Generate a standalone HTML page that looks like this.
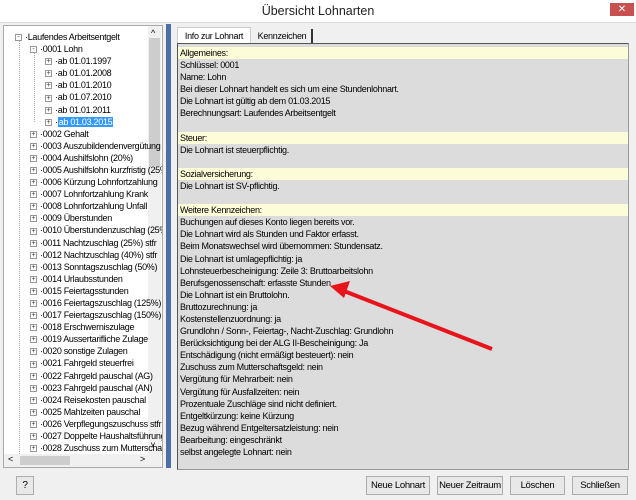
<!DOCTYPE html><html><head><meta charset="utf-8"><style>
*{margin:0;padding:0;box-sizing:border-box}
body{width:636px;height:500px;background:#f0f0f0;font-family:"Liberation Sans",sans-serif;font-size:9px;letter-spacing:-0.3px;color:#000;position:relative;overflow:hidden}
.a{position:absolute;white-space:nowrap}
.title{left:0;top:0;width:636px;height:22px;background:#fff;text-align:center;font-size:12.5px;letter-spacing:0;line-height:22px;color:#222}
.close{left:610px;top:3px;width:24px;height:13px;background:#c75050;color:#fff;font-size:10px;text-align:center;line-height:13px;letter-spacing:0}
.tree{left:3px;top:25px;width:160px;height:443px;background:#fff;border:1px solid #aaa;overflow:hidden}
.ti{position:absolute;height:12px;line-height:12px;white-space:nowrap}
.pb{display:inline-block;width:7px;height:7px;border:1px solid #999;font-size:7px;line-height:5px;text-align:center;color:#333;vertical-align:middle;margin-right:3px;background:#fff;letter-spacing:0}
.row{position:absolute;left:0;right:0;height:12.1px;line-height:12.1px;padding-left:2px;white-space:nowrap}
.y{background:#fdfcd8}
.btn{position:absolute;top:476px;height:19px;border:1px solid #adadad;background:#e8e8e8;text-align:center;line-height:17px;font-size:9.5px}
</style></head><body>
<div class="a title">Übersicht Lohnarten</div>
<div class="a close">✕</div>
<div class="a" style="left:0;top:22px;width:636px;height:1px;background:#ddd"></div>
<div class="a tree">
<div style="position:absolute;left:15px;top:12px;width:0;height:420px;border-left:1px dotted #aaa"></div>
<div style="position:absolute;left:30px;top:24px;width:0;height:72px;border-left:1px dotted #aaa"></div>
<div style="position:absolute;left:144px;top:0;width:13px;height:428px;background:#f0f0f0"></div>
<div style="position:absolute;left:145px;top:12px;width:11px;height:128px;background:#cdcdcd"></div>
<div style="position:absolute;left:147px;top:2px;font-size:9px">^</div>
<div style="position:absolute;left:147px;top:414px;font-size:8px">v</div>
<div style="position:absolute;left:0;top:428px;width:157px;height:13px;background:#f0f0f0"></div>
<div style="position:absolute;left:16px;top:430px;width:50px;height:9px;background:#cdcdcd"></div>
<div style="position:absolute;left:4px;top:428px;font-size:9px">&lt;</div>
<div style="position:absolute;left:136px;top:428px;font-size:9px">&gt;</div>
<div id="t"></div>
</div>
<div class="a" style="left:166px;top:24px;width:5px;height:444px;background:#4d6fa6"></div>
<div class="a" style="left:177px;top:27px;width:74px;height:17px;background:#fff;border:1px solid #ccc;border-bottom:none;text-align:center;line-height:16px">Info zur Lohnart</div>
<div class="a" style="left:253px;top:29px;width:60px;height:14px;border-right:2px solid #333;text-align:center;line-height:14px">Kennzeichen</div>
<div class="a" style="left:177px;top:43px;width:452px;height:427px;background:#dcdcdc;border:1px solid #555;border-right-color:#999;border-bottom-color:#999">
<div id="c" style="position:absolute;left:0;top:3px;right:0"></div>
</div>
<svg class="a" style="left:0;top:0" width="636" height="500"><line x1="492" y1="349" x2="344" y2="291" stroke="#e8141b" stroke-width="4"/><polygon points="330,286 350,281 344,298" fill="#e8141b"/></svg>
<div class="btn" style="left:16px;width:18px;font-size:10px">?</div>
<div class="btn" style="left:366px;width:64px">Neue Lohnart</div>
<div class="btn" style="left:437px;width:66px">Neuer Zeitraum</div>
<div class="btn" style="left:510px;width:55px">Löschen</div>
<div class="btn" style="left:572px;width:56px">Schließen</div>
<script>
var tr=[[0,'Laufendes Arbeitsentgelt','-'],[1,'0001 Lohn','-'],[2,'ab 01.01.1997'],[2,'ab 01.01.2008'],[2,'ab 01.01.2010'],[2,'ab 01.07.2010'],[2,'ab 01.01.2011'],[2,'ab 01.03.2015','+',1],
[1,'0002 Gehalt'],[1,'0003 Auszubildendenvergütung'],[1,'0004 Aushilfslohn (20%)'],[1,'0005 Aushilfslohn kurzfristig (25%)'],[1,'0006 Kürzung Lohnfortzahlung'],[1,'0007 Lohnfortzahlung Krank'],[1,'0008 Lohnfortzahlung Unfall'],[1,'0009 Überstunden'],[1,'0010 Überstundenzuschlag (25%)'],[1,'0011 Nachtzuschlag (25%) stfr'],[1,'0012 Nachtzuschlag (40%) stfr'],[1,'0013 Sonntagszuschlag (50%)'],[1,'0014 Urlaubsstunden'],[1,'0015 Feiertagsstunden'],[1,'0016 Feiertagszuschlag (125%)'],[1,'0017 Feiertagszuschlag (150%)'],[1,'0018 Erschwerniszulage'],[1,'0019 Aussertarifliche Zulage'],[1,'0020 sonstige Zulagen'],[1,'0021 Fahrgeld steuerfrei'],[1,'0022 Fahrgeld pauschal (AG)'],[1,'0023 Fahrgeld pauschal (AN)'],[1,'0024 Reisekosten pauschal'],[1,'0025 Mahlzeiten pauschal'],[1,'0026 Verpflegungszuschuss stfr'],[1,'0027 Doppelte Haushaltsführung'],[1,'0028 Zuschuss zum Mutterschaftsgeld']];
var h='';tr.forEach(function(r,i){var x=8+r[0]*15+(r[0]>0?0:0);var s=r[3]?'background:#3399ff;color:#fff;padding:0 1px':'';
h+='<div class="ti" style="left:'+(x+3)+'px;top:'+(5+i*12.09)+'px"><span class="pb">'+(r[2]||'+')+'</span>·<span style="'+s+'">'+r[1]+'</span></div>';});
document.getElementById('t').innerHTML=h;
var c=[['Allgemeines:',1],'Schlüssel: 0001','Name: Lohn','Bei dieser Lohnart handelt es sich um eine Stundenlohnart.','Die Lohnart ist gültig ab dem 01.03.2015','Berechnungsart: Laufendes Arbeitsentgelt','',['Steuer:',1],'Die Lohnart ist steuerpflichtig.','',['Sozialversicherung:',1],'Die Lohnart ist SV-pflichtig.','',['Weitere Kennzeichen:',1],'Buchungen auf dieses Konto liegen bereits vor.','Die Lohnart wird als Stunden und Faktor erfasst.','Beim Monatswechsel wird übernommen: Stundensatz.','Die Lohnart ist umlagepflichtig: ja','Lohnsteuerbescheinigung: Zeile 3: Bruttoarbeitslohn','Berufsgenossenschaft: erfasste Stunden','Die Lohnart ist ein Bruttolohn.','Bruttozurechnung: ja','Kostenstellenzuordnung: ja','Grundlohn / Sonn-, Feiertag-, Nacht-Zuschlag: Grundlohn','Berücksichtigung bei der ALG II-Bescheinigung: Ja','Entschädigung (nicht ermäßigt besteuert): nein','Zuschuss zum Mutterschaftsgeld: nein','Vergütung für Mehrarbeit: nein','Vergütung für Ausfallzeiten: nein','Prozentuale Zuschläge sind nicht definiert.','Entgeltkürzung: keine Kürzung','Bezug während Entgeltersatzleistung: nein','Bearbeitung: eingeschränkt','selbst angelegte Lohnart: nein'];
h='';c.forEach(function(r,i){var y=Array.isArray(r);h+='<div class="row'+(y?' y':'')+'" style="top:'+(i*12.09)+'px">'+(y?r[0]:r)+'</div>';});
document.getElementById('c').innerHTML=h;
</script>
</body></html>
